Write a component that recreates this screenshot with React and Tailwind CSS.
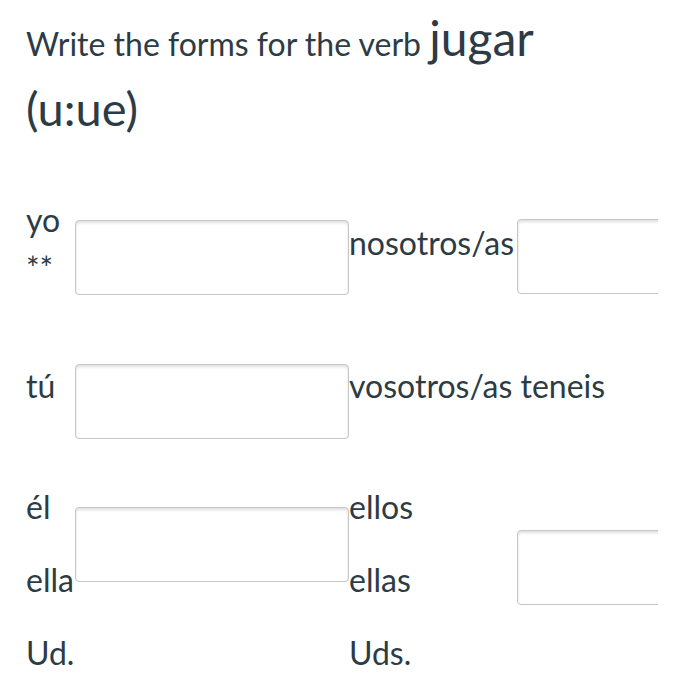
import React from 'react';

function Blank({ className = '' }) {
  return (
    <input
      type="text"
      className={`block h-[75px] rounded-[4px] border border-[#c6c6c6] bg-white shadow-[inset_0_2px_3px_rgba(0,0,0,0.13)] outline-none ${className}`}
    />
  );
}

export default function App() {
  return (
    <div className="min-h-screen bg-white pl-[26px] text-[#2d3b45]" style={{ fontFamily: 'Lato, "Open Sans", sans-serif' }}>
      {/* Titel */}
      <div className="pt-[14px] text-[32px] leading-none">
        Write the forms for the verb <span className="text-[48px]">jugar</span>
      </div>
      <div className="mt-[23px] text-[47px] leading-none">(u:ue)</div>

      <div className="mt-[64px] w-[632px] overflow-hidden text-[32px]">
        {/* yo / nosotros */}
        <div className="grid grid-cols-[49px_274px_168px_1fr] leading-[48px]">
          <div>
            <div>yo</div>
            <div>**</div>
          </div>
          <Blank className="mt-[24px] w-[274px]" />
          <div className="mt-[23px]">nosotros/as</div>
          <Blank className="mt-[23px] w-[274px]" />
        </div>

        {/* tú / vosotros */}
        <div className="mt-[67px] grid grid-cols-[49px_274px_168px_1fr] leading-[48px]">
          <div>tú</div>
          <Blank className="mt-[2px] w-[274px]" />
          <div className="col-span-2 whitespace-nowrap">vosotros/as teneis</div>
        </div>

        {/* él / ellos */}
        <div className="mt-[31px] grid grid-cols-[49px_274px_168px_1fr] leading-[73px]">
          <div>
            <div>él</div>
            <div>ella</div>
            <div>Ud.</div>
          </div>
          <Blank className="mt-[37px] w-[274px]" />
          <div>
            <div>ellos</div>
            <div>ellas</div>
            <div>Uds.</div>
          </div>
          <Blank className="mt-[60px] w-[274px]" />
        </div>
      </div>
    </div>
  );
}
